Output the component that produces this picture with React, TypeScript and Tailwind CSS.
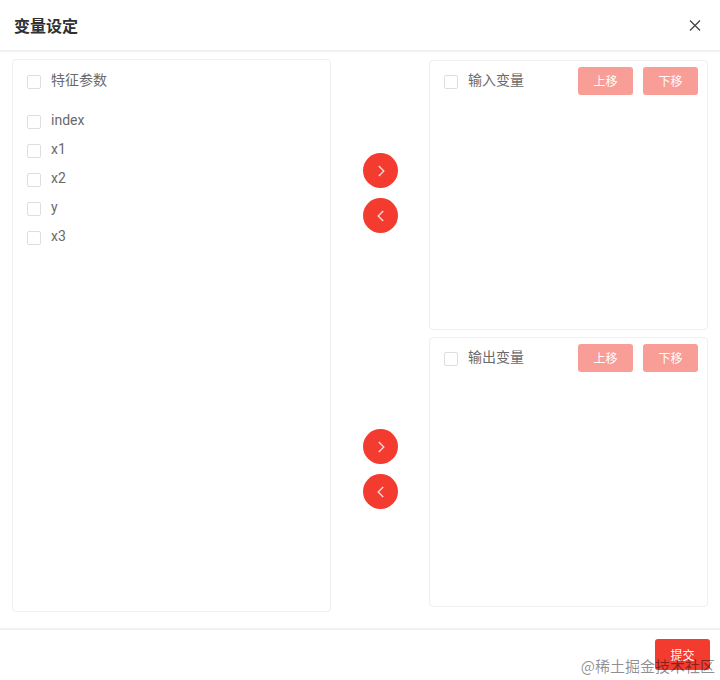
import * as React from "react";

const features = ["index", "x1", "x2", "y", "x3"];

const panelClass = "rounded border border-[#efefef] bg-white";

const CheckItem = ({ label }: { label: string }) => {
  const [checked, setChecked] = React.useState(false);

  return (
    <label className="flex items-center gap-[10px] font-[Roboto,'Noto_Sans_CJK_SC',sans-serif] text-sm leading-5 text-[#6a6a6a]">
      <input
        type="checkbox"
        checked={checked}
        onChange={(e) => setChecked(e.target.checked)}
        className="mt-[3px] size-[14px] shrink-0 appearance-none rounded-xs border border-[#dedede] bg-white checked:border-[#f33b2f] checked:bg-[#f33b2f]"
      />
      <span>{label}</span>
    </label>
  );
};

const Arrow = ({ direction }: { direction: "left" | "right" }) => (
  <button
    aria-label={direction === "right" ? "右移" : "左移"}
    className="flex size-[35px] items-center justify-center rounded-full bg-[#f33b2f] text-white hover:bg-[#f5564b]"
  >
    <svg
      viewBox="0 0 14 14"
      className="size-[14px]"
      fill="none"
      stroke="currentColor"
      strokeWidth="1.4"
      strokeOpacity="0.8"
    >
      <path
        d={direction === "right" ? "M4.8 2 L9.8 7 L4.8 12" : "M9.2 2 L4.2 7 L9.2 12"}
      />
    </svg>
  </button>
);

const MoveButton = ({ children }: { children: React.ReactNode }) => (
  <button
    disabled
    className="h-7 w-[55px] rounded-[3px] bg-[#f99d97] text-xs text-white"
  >
    {children}
  </button>
);

const VariablePanel = ({ title }: { title: string }) => (
  <section className={`${panelClass} h-[270px] pt-[6px] pr-[9px] pl-[14px]`}>
    <div className="flex items-start justify-between">
      <div className="pt-[3px]">
        <CheckItem label={title} />
      </div>
      <div className="flex gap-[10px]">
        <MoveButton>上移</MoveButton>
        <MoveButton>下移</MoveButton>
      </div>
    </div>
  </section>
);

const App = () => {
  return (
    <div className="relative flex min-h-screen flex-col bg-white font-['Noto_Sans_CJK_SC',sans-serif]">
      <header className="flex h-[52px] items-center justify-between border-b-2 border-[#f0f0f0] pr-[18px] pl-[14px]">
        <h1 className="text-base font-bold text-[#303133]">变量设定</h1>
        <button aria-label="关闭" className="text-[#444444]">
          <svg
            viewBox="0 0 14 14"
            className="size-[14px]"
            fill="none"
            stroke="currentColor"
            strokeWidth="1.3"
          >
            <path d="M2 2.5 L12 12.5 M12 2.5 L2 12.5" />
          </svg>
        </button>
      </header>

      <main className="grid flex-1 grid-cols-[8fr_98px_7fr] px-3 pt-[7px] pb-4">
        <section className={`${panelClass} px-[14px] pt-[10px]`}>
          <CheckItem label="特征参数" />
          <div className="mt-5 flex flex-col gap-[9px]">
            {features.map((name) => (
              <CheckItem key={name} label={name} />
            ))}
          </div>
        </section>

        <div className="flex flex-col gap-[6px] pl-0.5">
          {["input", "output"].map((key) => (
            <div
              key={key}
              className="flex h-[270px] flex-col items-center justify-center gap-[10px] pb-0.5"
            >
              <Arrow direction="right" />
              <Arrow direction="left" />
            </div>
          ))}
        </div>

        <div className="flex flex-col gap-[7px] pt-px">
          <VariablePanel title="输入变量" />
          <VariablePanel title="输出变量" />
        </div>
      </main>

      <footer className="flex h-[52px] items-start justify-end border-t-2 border-[#f0f0f0] pt-[9px] pr-[10px]">
        <button className="h-[31px] w-[55px] rounded-[3px] bg-[#f33b2f] text-xs text-white">
          提交
        </button>
      </footer>

      <div className="pointer-events-none absolute right-[5px] bottom-1 text-[15px] leading-5 text-black/45">
        @稀土掘金技术社区
      </div>
    </div>
  );
};

export default App;
